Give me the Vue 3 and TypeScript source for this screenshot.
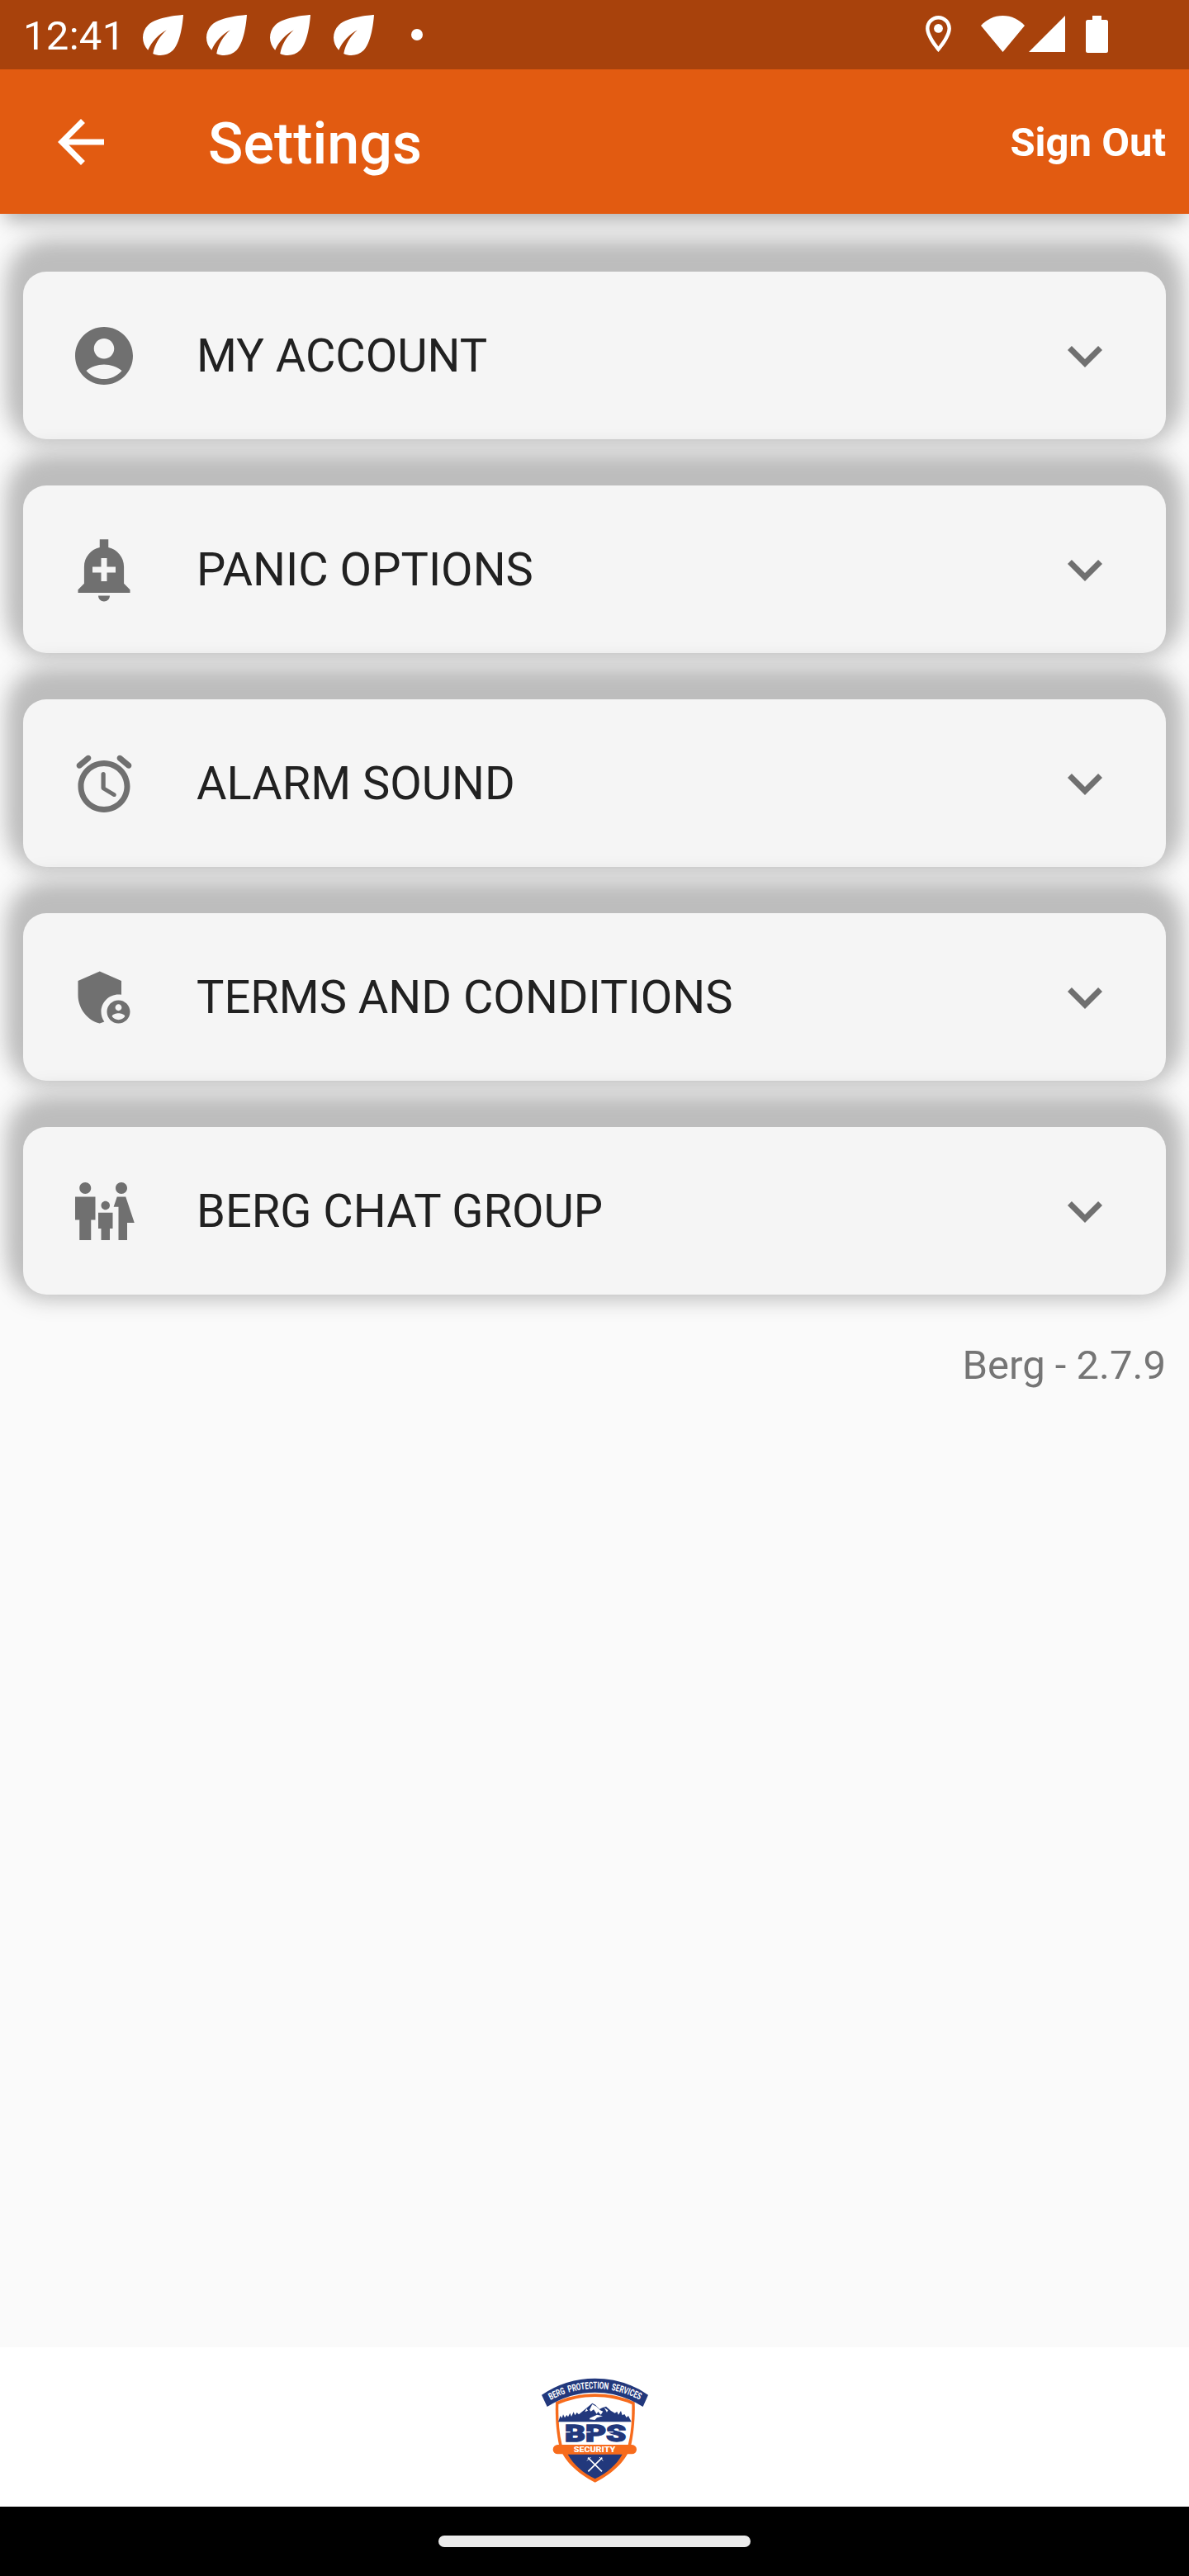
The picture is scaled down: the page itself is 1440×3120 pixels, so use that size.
<script setup lang="ts">
interface SettingsItem {
  label: string
  icon: string
}

const LEAF =
  'M6.05 8.05c-2.73 2.73-2.73 7.15-.02 9.88 1.47-3.4 4.09-6.24 7.36-7.93-2.77 2.34-4.71 5.61-5.39 9.32 2.6 1.23 5.8.78 7.95-1.37C19.43 14.47 20 4 20 4S9.53 4.57 6.05 8.05z'

const items: SettingsItem[] = [
  {
    label: 'MY ACCOUNT',
    icon: 'M12 2C6.48 2 2 6.48 2 12s4.48 10 10 10 10-4.48 10-10S17.52 2 12 2zm0 4c1.93 0 3.5 1.57 3.5 3.5S13.93 13 12 13s-3.5-1.57-3.5-3.5S10.07 6 12 6zm0 14c-2.03 0-4.43-.82-6.14-2.88C7.55 15.8 9.68 15 12 15s4.45.8 6.14 2.12C16.43 19.18 14.03 20 12 20z',
  },
  {
    label: 'PANIC OPTIONS',
    icon: 'M10.01 21.01c0 1.1.89 1.99 1.99 1.99s1.99-.89 1.99-1.99h-3.98zM18.88 16.82V11c0-3.25-2.25-5.97-5.38-6.69V1.5h-3v2.81C7.37 5.03 5.12 7.75 5.12 11v5.82L3 18.94V20h18v-1.06l-2.12-2.12zM16 13.01h-3v3h-2v-3H8V11h3V8h2v3h3v2.01z',
  },
  {
    label: 'ALARM SOUND',
    icon: 'M15.87 15.25l-3.37-2V8.72c0-.4-.32-.72-.72-.72h-.06c-.4 0-.72.32-.72.72v4.72c0 .35.18.68.49.86l3.65 2.19c.34.2.78.1.98-.24.21-.35.1-.8-.25-1zm5.31-10.24L18.1 2.45c-.42-.35-1.05-.3-1.41.13-.35.42-.29 1.05.13 1.41l3.07 2.56c.42.35 1.05.3 1.41-.13.36-.42.3-1.05-.12-1.41zM4.1 6.55l3.07-2.56c.43-.36.49-.99.13-1.41-.35-.43-.98-.48-1.4-.13L2.82 5.01c-.42.36-.48.99-.12 1.41.35.43.98.48 1.4.13zM12 4c-4.97 0-9 4.03-9 9s4.03 9 9 9 9-4.03 9-9-4.03-9-9-9zm0 16c-3.86 0-7-3.14-7-7s3.14-7 7-7 7 3.14 7 7-3.14 7-7 7z',
  },
  {
    label: 'TERMS AND CONDITIONS',
    icon: 'M17 11c.34 0 .67.04 1 .09V6.27L10.5 3 3 6.27v4.91c0 4.54 3.2 8.79 7.5 9.82.55-.13 1.08-.32 1.6-.55-.69-.98-1.1-2.17-1.1-3.45 0-3.31 2.69-6 6-6zM17 13c-2.21 0-4 1.79-4 4s1.79 4 4 4 4-1.79 4-4-1.79-4-4-4zm0 1.38c.62 0 1.12.51 1.12 1.12s-.51 1.12-1.12 1.12-1.12-.51-1.12-1.12.5-1.12 1.12-1.12zm0 5.37c-.93 0-1.74-.46-2.24-1.17.05-.72 1.51-1.08 2.24-1.08s2.19.36 2.24 1.08c-.5.71-1.31 1.17-2.24 1.17z',
  },
  {
    label: 'BERG CHAT GROUP',
    icon: 'M16 4c0-1.11.89-2 2-2s2 .89 2 2-.89 2-2 2-2-.89-2-2zM20 22v-6h2.5l-3-9h-3l-1.18 3.5H17V22h3zM12.5 11.5c.83 0 1.5-.67 1.5-1.5s-.67-1.5-1.5-1.5S11 9.17 11 10s.67 1.5 1.5 1.5zM5.5 6c1.11 0 2-.89 2-2s-.89-2-2-2-2 .89-2 2 .89 2 2 2zM7.5 22v-7H9V7H2v8h1.5v7h4zM14 22v-4h1v-5.5h-5V18h1v4h3z',
  },
]
</script>

<template>
  <div class="screen">
    <div class="status-bar">
      <div class="status-left">
        <span class="clock">12:41</span>
        <svg v-for="n in 4" :key="n" class="leaf" viewBox="4 4 16 16"><path :d="LEAF" /></svg>
        <span class="more-dot"></span>
      </div>
      <div class="status-right">
        <svg class="pin" viewBox="5 2 14 20">
          <path d="M12 2C8.13 2 5 5.13 5 9c0 5.25 7 13 7 13s7-7.75 7-13c0-3.87-3.13-7-7-7zM7 9c0-2.76 2.24-5 5-5s5 2.24 5 5c0 2.88-2.88 7.19-5 9.88C9.92 16.21 7 11.85 7 9z" />
          <circle cx="12" cy="9" r="2.45" />
        </svg>
        <svg class="wifi" viewBox="0 0 53 44"><path d="M26.5 44 0 12C7 4.500 16 0 26.500 0S46 4.500 53 12z" /></svg>
        <svg class="signal" viewBox="0 0 44 44"><path d="M0 44 44 0v44z" /></svg>
        <svg class="battery" viewBox="0 0 27 45">
          <path d="M8 0h11v5h5.500Q27 5 27 7.500v35Q27 45 24.500 45h-22Q0 45 0 42.500v-35Q0 5 2.500 5H8z" />
        </svg>
      </div>
    </div>

    <header class="app-bar">
      <svg class="back" viewBox="0 0 24 24"><path d="M20 11H7.83l5.59-5.59L12 4l-8 8 8 8 1.41-1.41L7.83 13H20v-2z" /></svg>
      <h1 class="title">Settings</h1>
      <span class="sign-out">Sign Out</span>
    </header>

    <main class="content">
      <div v-for="item in items" :key="item.label" class="card">
        <svg class="card-icon" viewBox="0 0 24 24"><path :d="item.icon" fill-rule="evenodd" /></svg>
        <span class="card-label">{{ item.label }}</span>
        <svg class="chevron" viewBox="0 0 24 24"><path d="M16.59 8.59L12 13.17 7.41 8.59 6 10l6 6 6-6z" /></svg>
      </div>
      <p class="version">Berg - 2.7.9</p>
    </main>

    <footer class="brand">
      <svg class="logo" viewBox="48 150 387 384">
        <defs><path id="ribbon-line" d="M80 231Q240 147 406 231" /></defs>
        <path d="M242 208C190 208 142 219 99 238 97 290 101 350 112 398 126 446 174 496 242 530 310 496 358 446 372 398 383 350 388 290 386 238 342 219 294 208 242 208z" fill="#f76b1c" />
        <path d="M242 219C194 219 149 229 109 246 108 300 111 350 122 394H362C373 350 377 300 376 246 335 229 290 219 242 219z" fill="#fff" />
        <path d="M143 428H341C320 466 286 495 242 517 198 495 164 466 143 428z" fill="#22387c" />
        <path d="M48 212Q136 152 242 152T435 212L416 255Q334 203 242 203T68 255z" fill="#22387c" />
        <text class="ribbon-text"><textPath href="#ribbon-line" textLength="338" lengthAdjust="spacingAndGlyphs">BERG PROTECTION SERVICES</textPath></text>
        <path d="M108 310 116 288 122 296 126 283 132 295 139 285 144 292 151 278 156 291 164 274 169 286 176 276 183 283 205 265 232 242 243 248 258 264 268 259 282 254 300 270 314 278 322 273 327 284 336 270 341 286 349 282 356 294 363 288 374 310z" fill="#22387c" />
        <path d="M232 246 222 266 227 272 237 265 248 281 253 273 263 284 271 272 261 268 247 254zM211 262 205 274 216 269zM275 258 285 275 289 268zM223 296 249 284 270 289 249 295 241 303 222 301z" fill="#fff" />
        <text class="logo-name" x="132" y="381" textLength="223" lengthAdjust="spacingAndGlyphs">BPS</text>
        <path d="M128 347H152M206 347H226M281 347H308" stroke="#fff" stroke-width="4" />
        <rect x="89" y="393" width="304" height="34" rx="17" fill="#f76b1c" />
        <text class="logo-tag" x="164" y="419" textLength="152" lengthAdjust="spacingAndGlyphs">SECURITY</text>
        <g stroke="#fff" fill="none">
          <path d="M216 440 267 490M268 440 217 490" stroke-width="5" />
          <path d="M213 451 226 438M258 438 271 451" stroke-width="3" />
        </g>
      </svg>
    </footer>

    <div class="nav-bar"><span class="nav-pill"></span></div>
  </div>
</template>

<style>
body {
  margin: 0;
}
</style>

<style scoped>
.screen {
  display: flex;
  flex-direction: column;
  width: 1440px;
  height: 3120px;
  overflow: hidden;
  background: #fafafa;
  font-family: Roboto, sans-serif;
}
svg {
  display: block;
  flex: none;
}
.status-bar {
  display: flex;
  justify-content: space-between;
  height: 84px;
  background: #a8420c;
  color: #fff;
  position: relative;
  z-index: 2;
}
.status-bar svg {
  fill: #fff;
}
.status-left {
  display: flex;
  align-items: center;
  padding-left: 28px;
}
.clock {
  width: 144.5px;
  font-size: 49px;
  line-height: 58px;
  padding-top: 4px;
  letter-spacing: 0.3px;
}
.leaf {
  width: 49px;
  height: 49px;
  margin-right: 28px;
}
.more-dot {
  width: 14px;
  height: 14px;
  margin-left: 17px;
  border-radius: 50%;
  background: #fff;
}
.status-right {
  display: flex;
  align-items: flex-start;
  padding: 19px 98px 0 0;
}
.pin {
  width: 31px;
  height: 44px;
  margin-right: 36px;
}
.wifi {
  width: 53px;
  height: 44px;
  margin-right: 5px;
}
.signal {
  width: 44px;
  height: 44px;
  margin-right: 25px;
}
.battery {
  width: 27px;
  height: 45px;
}
.app-bar {
  display: flex;
  align-items: center;
  height: 175px;
  box-sizing: border-box;
  padding: 0 28px 0 56px;
  background: #e25b11;
  color: #fff;
  position: relative;
  z-index: 1;
  box-shadow: 0 14px 22px -6px rgba(0, 0, 0, 0.3);
}
.back {
  width: 84px;
  height: 84px;
  fill: #fff;
}
.title {
  flex: 1;
  margin: 0 0 0 112px;
  padding-top: 5px;
  font-size: 70px;
  font-weight: 500;
  line-height: 82px;
}
.sign-out {
  padding-top: 2px;
  font-size: 49px;
  font-weight: 700;
}
.content {
  display: flex;
  flex: 1;
  flex-direction: column;
  gap: 56px;
  padding: 70px 28px 0;
}
.card {
  display: flex;
  align-items: center;
  box-sizing: border-box;
  height: 203px;
  padding: 0 56px;
  border-radius: 28px;
  background: #f5f5f5;
  box-shadow:
    0 -25px 30px 13px #bdbdbd,
    0 -9px 28px 13px #bdbdbd;
}
.card-icon,
.chevron {
  width: 84px;
  height: 84px;
  fill: #707070;
}
.card-label {
  flex: 1;
  margin-left: 70px;
  color: #212121;
  font-size: 56px;
  line-height: 66px;
}
.version {
  margin: 1px 0 0;
  color: #757575;
  font-size: 49px;
  line-height: 58px;
  text-align: right;
}
.brand {
  display: flex;
  justify-content: center;
  box-sizing: border-box;
  height: 193px;
  padding-top: 37px;
  background: #fff;
}
.logo {
  width: 129px;
  height: 128px;
}
.ribbon-text {
  fill: #fff;
  font-size: 35px;
  font-weight: 700;
  word-spacing: 8px;
}
.logo-name {
  fill: #22387c;
  stroke: #22387c;
  stroke-width: 4px;
  font-size: 82px;
  font-weight: 900;
}
.logo-tag {
  fill: #fff;
  font-size: 29px;
  font-weight: 900;
}
.nav-bar {
  display: flex;
  align-items: center;
  justify-content: center;
  height: 84px;
  background: #000;
}
.nav-pill {
  width: 378px;
  height: 14px;
  border-radius: 7px;
  background: #ebebeb;
}
</style>
